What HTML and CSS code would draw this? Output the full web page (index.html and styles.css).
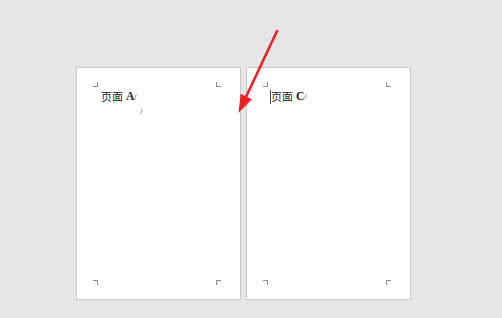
FILE: index.html
```html
<!DOCTYPE html>
<html lang="zh-CN">
<head>
  <meta charset="UTF-8">
  <title>页面</title>
  <link rel="stylesheet" href="styles.css">
</head>
<body>

  <main class="hojas">
    <div class="hoja">
      <div class="area">
        <span class="marca tl"></span>
        <span class="marca tr"></span>
        <span class="marca bl"></span>
        <span class="marca br"></span>
        <p class="linea">页面 <b>A</b><i class="retorno"></i></p>
        <p class="linea vacia"><i class="retorno"></i></p>
      </div>
    </div>
    <div class="hoja">
      <div class="area">
        <span class="marca tl"></span>
        <span class="marca tr"></span>
        <span class="marca bl"></span>
        <span class="marca br"></span>
        <p class="linea"><span class="cursor"></span>页面 <b>C</b><i class="retorno"></i></p>
      </div>
    </div>
  </main>

  <svg class="flecha" width="502" height="318" viewBox="0 0 502 318">
    <line x1="277" y1="31" x2="245" y2="99" stroke="#ec2027" stroke-width="2.6" stroke-linecap="round"/>
    <polygon points="238.5,113 240.6,93.8 251.8,99.2" fill="#ec2027"/>
  </svg>

</body>
</html>
```

FILE: styles.css
```css
body {
  margin: 0;
  padding: 0;
  background-color: #e6e6e6;
  width: 502px;
  height: 318px;
  overflow: hidden;
  font-family: "Liberation Serif", "Noto Sans CJK SC", serif;
}
.hojas {
  display: flex;
  gap: 5px;
  padding: 67px 0 0 76px;
}
.hoja {
  box-sizing: border-box;
  width: 165px;
  height: 233px;
  background-color: #fff;
  border: 1px solid #c9c9c9;
  padding: 18px 0 0 20px;
}
.area {
  position: relative;
  width: 120px;
  height: 195px;
}
.marca {
  position: absolute;
  width: 4px;
  height: 4px;
  border: 0 solid #8e8e8e;
}
.marca.tl { left: -4px; top: -4px; border-right-width: 1px; border-bottom-width: 1px; }
.marca.tr { right: -4px; top: -4px; border-left-width: 1px; border-bottom-width: 1px; }
.marca.bl { left: -4px; bottom: -4px; border-right-width: 1px; border-top-width: 1px; }
.marca.br { right: -4px; bottom: -4px; border-left-width: 1px; border-top-width: 1px; }
.linea {
  margin: 0;
  padding-left: 4px;
  font-family: "Noto Sans CJK SC", sans-serif;
  font-size: 11px;
  line-height: 17px;
  color: #222;
  display: flex;
  align-items: center;
  height: 17px;
  padding-top: 2px;
}
.linea b {
  font-family: "Liberation Serif", serif;
  font-weight: bold;
  font-size: 11.5px;
  margin-left: 3px;
}
.linea.vacia {
  padding-left: 43px;
  padding-top: 0;
  height: 12px;
}
.retorno {
  display: inline-block;
  width: 1px;
  height: 5px;
  margin-left: 1px;
  background-color: #9a9a9a;
  transform: skewX(-20deg);
}
.cursor {
  display: inline-block;
  width: 1px;
  height: 14px;
  background-color: #444;
  margin-left: -1px;
}
.flecha {
  position: absolute;
  left: 0;
  top: 0;
  pointer-events: none;
}
```
